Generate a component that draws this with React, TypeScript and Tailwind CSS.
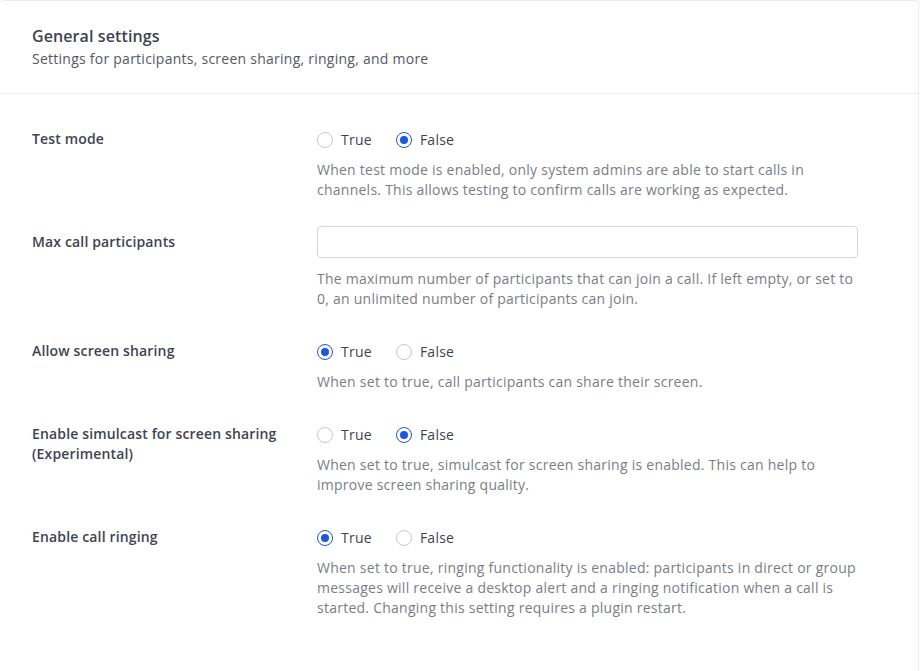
import React from "react";

type Opt = "true" | "false";

function Radio({ checked, label }: { checked: boolean; label: string }) {
  return (
    <label className="flex items-center gap-2 cursor-pointer">
      {checked ? (
        <span className="flex h-4 w-4 items-center justify-center rounded-full border border-[#1c58d9] bg-white">
          <span className="h-2 w-2 rounded-full bg-[#1c58d9]" />
        </span>
      ) : (
        <span className="h-4 w-4 rounded-full border border-[#c8c9cc] bg-white" />
      )}
      <span className="text-[14px] leading-5 tracking-[0.25px] text-[#3f4350]">{label}</span>
    </label>
  );
}

function BoolRow({ label, value, help, className }: { label: React.ReactNode; value: Opt; help: React.ReactNode; className?: string }) {
  return (
    <div className={"flex " + (className ?? "")}>
      <div className="w-[285px] shrink-0 pr-[10px] -mt-px text-[14px] font-semibold leading-5 tracking-[0.15px] text-[#3f4350]">{label}</div>
      <div className="w-[541px]">
        <div className="flex h-5 items-center gap-6">
          <Radio checked={value === "true"} label="True" />
          <Radio checked={value === "false"} label="False" />
        </div>
        <p className="mt-[10px] text-[14px] leading-5 tracking-[0.25px] text-[#7b7d85]">{help}</p>
      </div>
    </div>
  );
}

export default function App() {
  return (
    <div className="min-h-[671px] bg-white" style={{ fontFamily: "'Open Sans', 'Noto Sans', sans-serif" }}>
      <div className="min-h-[680px] w-[919px] rounded-[4px] border border-l-0 border-[#ececec] bg-white">
        <div className="border-b border-[#ececec] px-8 pt-[23px] pb-6">
          <h2 className="text-[16px] font-semibold leading-6 tracking-[0.1px] text-[#3f4350]">General settings</h2>
          <p className="mt-px text-[14px] leading-5 tracking-[0.25px] text-[#555862]">Settings for participants, screen sharing, ringing, and more</p>
        </div>

        <div className="px-8 pt-9">
          <BoolRow
            label="Test mode"
            value="false"
            help="When test mode is enabled, only system admins are able to start calls in channels. This allows testing to confirm calls are working as expected."
          />

          <div className="mt-[26px] flex">
            <div className="w-[285px] shrink-0 pr-[10px] pt-[6px] text-[14px] font-semibold leading-5 tracking-[0.15px] text-[#3f4350]">Max call participants</div>
            <div className="w-[541px]">
              <input type="text" className="block h-8 w-full rounded-[4px] border border-[#d6d6d6] bg-white px-3 text-[14px] text-[#3f4350] outline-none" />
              <p className="mt-[11px] text-[14px] leading-5 tracking-[0.25px] text-[#7b7d85]">
                The maximum number of participants that can join a call. If left empty, or set to 0, an unlimited number of participants can join.
              </p>
            </div>
          </div>

          <BoolRow
            className="mt-[33px]"
            label="Allow screen sharing"
            value="true"
            help="When set to true, call participants can share their screen."
          />

          <BoolRow
            className="mt-[33px]"
            label={<>Enable simulcast for screen sharing (Experimental)</>}
            value="false"
            help="When set to true, simulcast for screen sharing is enabled. This can help to improve screen sharing quality."
          />

          <BoolRow
            className="mt-[33px]"
            label="Enable call ringing"
            value="true"
            help="When set to true, ringing functionality is enabled: participants in direct or group messages will receive a desktop alert and a ringing notification when a call is started. Changing this setting requires a plugin restart."
          />
        </div>
      </div>
    </div>
  );
}
